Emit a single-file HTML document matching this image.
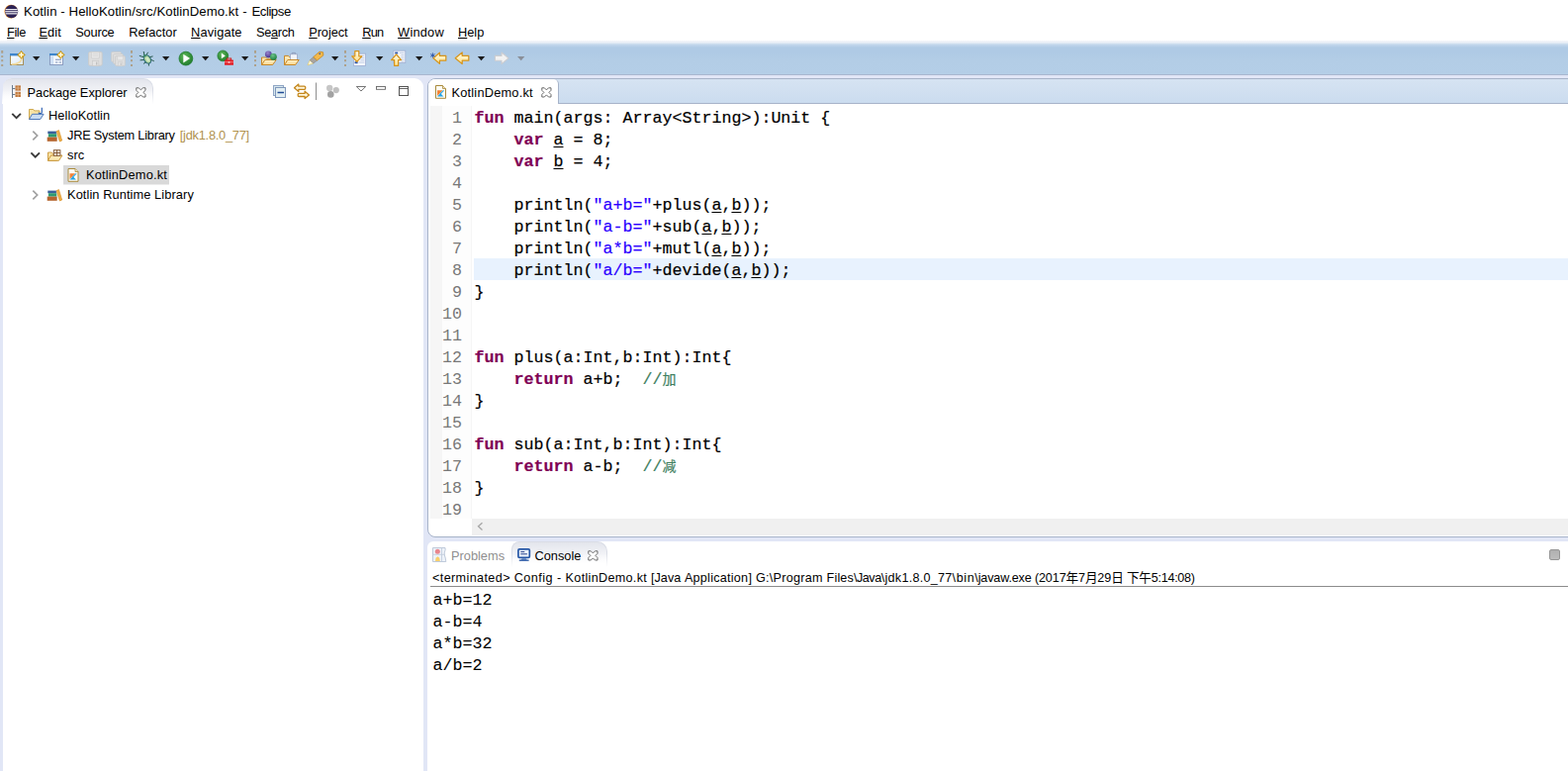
<!DOCTYPE html>
<html lang="en">
<head>
<meta charset="utf-8">
<title>Kotlin - HelloKotlin/src/KotlinDemo.kt - Eclipse</title>
<style>
*{box-sizing:border-box;margin:0;padding:0}
html,body{width:1585px;height:779px;overflow:hidden;background:#fff}
body{position:relative;font-family:"Liberation Sans","Noto Sans CJK SC",sans-serif;font-size:12px;color:#000}
.a{position:absolute}
.t{position:absolute;white-space:pre;line-height:16px;height:16px}
u{text-decoration:underline;text-underline-offset:1px}
/* title + menu */
#title{left:24px;top:4px;font-size:13.2px}
.m{top:25px;font-size:12.8px}
/* toolbar */
#tb{left:0;top:41px;width:1585px;height:35px;background:linear-gradient(#f3f5f9 0,#e9eff7 2px,#c3d7ec 4px,#afcae5 7px,#afcae5 12px,#b3cde6 20px,#b4cee7 100%)}
#tbline{left:0;top:75px;width:1585px;height:1px;background:#a9b7cf}
#bg{left:0;top:76px;width:1585px;height:703px;background:#e1e6f6}
/* panels */
#left{left:3px;top:79px;width:425px;height:710px;background:#fff;border-radius:9px 9px 0 0}
#editor{left:432px;top:79px;width:1170px;height:464px;background:#fff;border:1px solid #a7b3c9;border-radius:8px 0 0 8px}
#edtabs{left:433px;top:80px;width:1160px;height:25px;background:linear-gradient(#d6e3f2,#cbdcef);border-bottom:1px solid #a7b3c9;border-radius:7px 0 0 0}
#edtab{left:433px;top:80px;width:132px;height:25px;background:#fff;border-right:1px solid #a7b3c9;border-radius:7px 5px 0 0}
#console{left:432px;top:547px;width:1170px;height:240px;background:#fff;border-radius:6px 0 0 0}
.pe{font-size:12.8px}
#petab{left:3px;top:79px;width:152px;height:26px;border-radius:9px 10px 0 0;background:linear-gradient(#e3e5ec 0,#f1f2f6 45%,#fff 90%);border:1px solid #dadde6;border-bottom:0;border-left:0}
#contab{left:517px;top:547px;width:97px;height:26px;border-radius:8px 10px 0 0;background:linear-gradient(#e3e5ec 0,#f1f2f6 45%,#fff 90%);border:1px solid #dadde6;border-bottom:0}
#petab::after,#contab::after{content:"";position:absolute;left:-1px;right:-1px;bottom:0;height:14px;background:linear-gradient(rgba(255,255,255,0),#fff)}
/* code */
.ln,.c{font-family:"Liberation Mono","Noto Sans CJK SC",monospace;font-size:16.66px;line-height:22px;height:22px;position:absolute;white-space:pre}
.ln{left:427px;width:40px;text-align:right;color:#787878}
.c{left:479.5px;color:#000}
.k{color:#7f0055;font-weight:bold}
.s{color:#2a00ff}
.cm{color:#3f7f5f}
.zh{font-size:14px;line-height:10px;font-family:"Noto Sans CJK SC",sans-serif}
.c{-webkit-text-stroke:0.2px currentColor}
.o{-webkit-text-stroke:0.08px currentColor}
.v{text-decoration:underline;text-decoration-thickness:1px;text-underline-offset:2px}
.o{font-family:"Liberation Mono","Noto Sans CJK SC",monospace;font-size:16.66px;line-height:22px;height:22px;position:absolute;white-space:pre;left:437.5px}
</style>
</head>
<body>
<!-- title bar -->
<svg class="a" style="left:2.500px;top:4px" width="16" height="16" viewBox="0 0 16 16"><circle cx="8.2" cy="7.6" r="6.8" fill="#f7941e"/><circle cx="8.6" cy="7.6" r="6.6" fill="#2c2255"/><rect x="2.6" y="5.1" width="12" height="1.1" fill="#fff"/><rect x="2.2" y="7.2" width="12.8" height="1.1" fill="#fff"/><rect x="2.6" y="9.3" width="12" height="1.1" fill="#fff"/></svg>
<div class="t" id="title"><span style="letter-spacing:0.098px">Kotlin - </span><span style="letter-spacing:0.054px">HelloKotlin/src/KotlinDemo.kt</span><span style="letter-spacing:0.489px"> - </span><span style="letter-spacing:-0.445px">Eclipse</span></div>
<!-- menu bar -->
<div class="t m" style="left:7.1px;letter-spacing:-0.481px"><u>F</u>ile</div>
<div class="t m" style="left:39.4px;letter-spacing:0.084px"><u>E</u>dit</div>
<div class="t m" style="left:76.3px;letter-spacing:-0.224px">Source</div>
<div class="t m" style="left:130.2px;letter-spacing:0.028px">Refactor</div>
<div class="t m" style="left:193.1px;letter-spacing:0.123px"><u>N</u>avigate</div>
<div class="t m" style="left:259.1px;letter-spacing:-0.358px">Se<u>a</u>rch</div>
<div class="t m" style="left:312.2px;letter-spacing:-0.061px"><u>P</u>roject</div>
<div class="t m" style="left:366.2px;letter-spacing:-0.728px"><u>R</u>un</div>
<div class="t m" style="left:402.1px;letter-spacing:0.214px"><u>W</u>indow</div>
<div class="t m" style="left:463px;letter-spacing:-0.007px"><u>H</u>elp</div>
<!-- toolbar -->
<div class="a" id="tb"></div>
<div class="a" id="tbline"></div>
<div class="a" id="bg"></div>
<!-- TOOLBAR-ICONS -->
<svg class="a" style="left:0;top:41px" width="560" height="35" viewBox="0 41 560 35">
<defs>
<linearGradient id="gWin" x1="0" y1="0" x2="1" y2="1"><stop offset="0" stop-color="#fdfeff"/><stop offset="1" stop-color="#dbe9f8"/></linearGradient>
<linearGradient id="gFold" x1="0" y1="0" x2="0" y2="1"><stop offset="0" stop-color="#fef2cc"/><stop offset="1" stop-color="#f8d68c"/></linearGradient>
<linearGradient id="gArr" x1="0" y1="0" x2="0" y2="1"><stop offset="0" stop-color="#fffbe6"/><stop offset="1" stop-color="#fce08a"/></linearGradient>
<radialGradient id="gGreen" cx="0.4" cy="0.35" r="0.7"><stop offset="0" stop-color="#5db85a"/><stop offset="1" stop-color="#1f7a2a"/></radialGradient>
<radialGradient id="gPurp" cx="0.4" cy="0.3" r="0.7"><stop offset="0" stop-color="#9a86cc"/><stop offset="1" stop-color="#4a3591"/></radialGradient>
<radialGradient id="gGrn2" cx="0.4" cy="0.3" r="0.7"><stop offset="0" stop-color="#6cc48a"/><stop offset="1" stop-color="#1d7f3f"/></radialGradient>
<g id="dd"><path d="M0 0h7.4l-3.7 4.3z"/></g>
<g id="hd"><rect x="0" y="-0.600" width="2" height="2.800" fill="#ada08a"/><rect x="0" y="4.600" width="2" height="1.800" fill="#ada08a"/><rect x="0" y="8.600" width="2" height="2" fill="#ada08a"/><rect x="0" y="13.400" width="2" height="2" fill="#ada08a"/></g>
<g id="star"><path d="M0 -3.900C1 -2.400 2.400 -1 3.900 0C2.400 1 1 2.400 0 3.900C-1 2.400 -2.400 1 -3.900 0C-2.400 -1 -1 -2.400 0 -3.900Z" fill="#e0b030" stroke="#b98a14" stroke-width="0.700"/><circle r="2.300" fill="#e6bb3e"/><path d="M0 -2.300V2.300M-2.300 0H2.300" stroke="#fffbe6" stroke-width="1.100"/></g>
</defs>
<!-- handles -->
<use href="#hd" x="1.200" y="51.600"/><use href="#hd" x="132" y="51.600"/><use href="#hd" x="257" y="51.600"/><use href="#hd" x="348" y="51.600"/>
<!-- dropdown arrows -->
<g fill="#1a1a1a"><use href="#dd" x="33" y="57"/><use href="#dd" x="73" y="57"/><use href="#dd" x="164" y="57"/><use href="#dd" x="204" y="57"/><use href="#dd" x="244" y="57"/><use href="#dd" x="335" y="57"/><use href="#dd" x="380" y="57"/><use href="#dd" x="420" y="57"/><use href="#dd" x="482.8" y="57"/></g>
<use href="#dd" x="523" y="57" fill="#8a8f98"/>
<!-- 1 new -->
<rect x="10.5" y="54.5" width="13" height="11" fill="url(#gWin)" stroke="#a89058" stroke-width="1"/>
<rect x="10" y="54" width="14" height="2.4" fill="#3f86cc"/>
<path d="M12 65c5 0 9.5-2 10.5-7" fill="none" stroke="#f3dca0" stroke-width="1.6"/>
<use href="#star" x="21.5" y="55.4"/>
<!-- 2 new wizard -->
<rect x="50.5" y="54.5" width="13" height="11" fill="#f4f8fd" stroke="#8b9cc0" stroke-width="1"/>
<rect x="50" y="54" width="9" height="2.2" fill="#3f86cc"/>
<rect x="51" y="56.4" width="3.2" height="8.6" fill="#cfe0f5"/>
<path d="M56 60.2h6M56 63h2.4M59.6 63h2.4" stroke="#7d8fb8" stroke-width="1.1"/>
<use href="#star" x="61.4" y="55.4"/>
<!-- 3 save (disabled) -->
<rect x="89.600" y="52.500" width="13.600" height="13.800" rx="1.400" fill="#dedede" stroke="#c9c9c9" stroke-width="0.900"/>
<rect x="92.400" y="52.600" width="8" height="6.400" rx="0.800" fill="#e7e7e7" stroke="#cbcbcb" stroke-width="0.700"/><path d="M93.800 54.600h5.200M93.800 56.400h5.200" stroke="#d2d2d2" stroke-width="0.700"/>
<rect x="93.600" y="61.600" width="6.200" height="4.800" fill="#e4e4e4" stroke="#cbcbcb" stroke-width="0.700"/><rect x="97" y="62.600" width="1.400" height="3" fill="#bfbfbf"/>
<!-- 4 save all (disabled) -->
<g fill="#dfdfdf" stroke="#cacaca" stroke-width="0.800"><rect x="112.600" y="52.400" width="9.800" height="10" rx="1.200"/><rect x="114.600" y="54.500" width="9.800" height="10" rx="1.200"/><rect x="116.600" y="56.600" width="9.800" height="10" rx="1.200"/></g>
<rect x="118.600" y="56.800" width="5.800" height="4" rx="0.600" fill="#e8e8e8" stroke="#cccccc" stroke-width="0.600"/><rect x="119.400" y="62.800" width="4.400" height="3.800" fill="#e4e4e4" stroke="#cccccc" stroke-width="0.600"/><rect x="121.600" y="63.600" width="1.100" height="2.400" fill="#c2c2c2"/>
<!-- 5 bug -->
<g stroke="#2b5c50" stroke-width="1" fill="none" stroke-linecap="round"><path d="M146 56l-0.700-3.600M147.800 55.600l1.700-2.500M146 58l-4.800-1.600M146.400 60.400l-4.400 0.400M147.600 62.600l-2.200 1.600M151.400 57.600l2.800-0.600M152.200 60.200l3.200 1.400M150.600 63l-0.200 3.200"/></g>
<ellipse cx="149" cy="59.900" rx="3.200" ry="4.500" transform="rotate(-32 149 59.900)" fill="#aed4a0" stroke="#2a6874" stroke-width="1.100"/>
<ellipse cx="149.200" cy="60.200" rx="1.400" ry="2.600" transform="rotate(-32 149 59.900)" fill="#d4ebc8"/>
<circle cx="146.200" cy="56.400" r="1.400" fill="#3f8a6c"/>
<!-- 6 run -->
<circle cx="187.9" cy="59.1" r="6.9" fill="url(#gGreen)" stroke="#1c7a2c" stroke-width="0.8"/>
<path d="M185.300 54.700l6.800 4.400-6.800 4.400z" fill="#fff"/>
<!-- 7 run ext -->
<circle cx="225.3" cy="56.4" r="5.4" fill="url(#gGreen)" stroke="#1c7a2c" stroke-width="0.7"/>
<path d="M223.8 53.6l4 2.8-4 2.8z" fill="#fff"/>
<rect x="229.4" y="59" width="4.2" height="2" fill="none" stroke="#d81e1e" stroke-width="1"/>
<rect x="227" y="60.6" width="9" height="5.2" rx="0.6" fill="#e21e26"/>
<path d="M227 62.8h9" stroke="#f59a9a" stroke-width="0.8"/><rect x="230.6" y="62" width="1.8" height="1.8" fill="#f8c0c0"/>
<!-- 8 open type -->
<path d="M264.5 58h4l1 1.2h5.5v6.3h-10.5z" fill="#fbe6b0" stroke="#c8892a" stroke-width="1"/>
<path d="M264.6 65.5l3.2-5h11.4l-3.6 5z" fill="url(#gFold)" stroke="#c8892a" stroke-width="1" stroke-linejoin="round"/>
<circle cx="271.3" cy="54.8" r="3.4" fill="url(#gPurp)"/>
<circle cx="276.4" cy="57.4" r="3.4" fill="url(#gGrn2)"/>
<!-- 9 open task -->
<path d="M287.5 56.4h4l1 1.2h5.5v7.9h-10.5z" fill="#fbe6b0" stroke="#c8892a" stroke-width="1"/>
<rect x="293.4" y="54.8" width="7" height="5.6" fill="#f2f5fb" stroke="#9aa6c4" stroke-width="0.8"/>
<path d="M295.2 54.6v-1.2h3.4v1.2" fill="none" stroke="#8b98b8" stroke-width="0.9"/>
<path d="M287.6 65.5l3.2-5h11.4l-3.6 5z" fill="url(#gFold)" stroke="#c8892a" stroke-width="1" stroke-linejoin="round"/>
<!-- 10 pencil/search -->
<path d="M311 65.8l2.2-5 3.6 3.2z" fill="#fffbe0" stroke="#e6c65a" stroke-width="0.6"/>
<path d="M313.2 60.8l3.6-3.2 3.8 3.4-3.8 3z" fill="#a8a4a0" stroke="#8a8680" stroke-width="0.6"/>
<path d="M316.8 57.6l6.2-5.4 3.6.6.2 3.2-6.200 5z" fill="#f4b94a" stroke="#c8861c" stroke-width="0.8" stroke-linejoin="round"/>
<path d="M322.6 54.8l1.2-1" stroke="#2b4fa0" stroke-width="1.2"/>
<!-- 11 next annotation -->
<rect x="357.4" y="54.2" width="12.2" height="12.2" fill="#f3f6fc" stroke="#9fb0d2" stroke-width="0.8"/>
<path d="M364.400 56.4h4M364.400 58.6h4M364.400 60.800h4M362.600 63h5.800" stroke="#b9c6e0" stroke-width="0.9"/>
<rect x="358.6" y="62.2" width="3" height="2" fill="#2c55a8"/>
<path d="M358.8 51.600h4v5.200h3l-5 5.600-5-5.600h3z" fill="url(#gArr)" stroke="#d6941a" stroke-width="1.2" stroke-linejoin="round"/>
<!-- 12 prev annotation -->
<rect x="397.800" y="51.200" width="12" height="12.400" fill="#f3f6fc" stroke="#9fb0d2" stroke-width="0.8"/>
<rect x="399.200" y="52.600" width="3" height="1.800" fill="#2c55a8"/>
<path d="M404 53.400h4.600M405.400 55.600h3.200M405.400 57.800h3.200M405.400 60h3.200M405.400 62.200h3.200" stroke="#b9c6e0" stroke-width="0.9"/>
<path d="M398.600 66.400h4v-5.800h3l-5-5.600-5 5.600h3z" fill="url(#gArr)" stroke="#d6941a" stroke-width="1.2" stroke-linejoin="round"/>
<!-- 13 last edit -->
<path d="M450.800 56.400v4.800h-6.400v3.200l-6.400-5.600 6.400-5.600v3.200z" fill="url(#gArr)" stroke="#d6941a" stroke-width="1.2" stroke-linejoin="round"/>
<path d="M437.400 53.400v5M435.200 54.600l4.400 2.600M439.600 54.600l-4.400 2.600" stroke="#2c55a8" stroke-width="0.9"/>
<!-- 14 back -->
<path d="M473.800 56.400v4.800h-6.600v3.400l-7-5.800 7-5.800v3.400z" fill="url(#gArr)" stroke="#d6941a" stroke-width="1.2" stroke-linejoin="round"/>
<!-- 15 forward disabled -->
<path d="M500.400 56.400v4.800h6.600v3.400l7-5.800-7-5.800v3.400z" fill="#f2f2f2" stroke="#cccdd0" stroke-width="1.1" stroke-linejoin="round"/>
</svg>
<!-- /TOOLBAR-ICONS -->
<!-- panels -->
<div class="a" id="left"></div>
<div class="a" id="editor"></div>
<div class="a" id="edtabs"></div>
<div class="a" id="edtab"></div>
<div class="a" id="console"></div>
<!-- LEFT-PANEL -->
<div class="a" id="petab"></div>
<svg class="a" style="left:0;top:79px" width="430" height="130" viewBox="0 79 430 130">
<defs>
<g id="chd"><path d="M0 0l4.300 4.300 4.300-4.300" fill="none" stroke="#3a3a3a" stroke-width="1.900"/></g>
<g id="chr"><path d="M0 0l4.400 4.400-4.400 4.400" fill="none" stroke="#a0a0a0" stroke-width="1.700"/></g>
<g id="lib"><rect x="1" y="1.200" width="8.600" height="2.600" fill="#3a5f9a"/><rect x="1.600" y="3.800" width="8.400" height="3.400" fill="#2f9a72"/><rect x="0.400" y="7.200" width="10" height="4.200" fill="#b5652f"/><path d="M9.800 1.200l2.400-1 3.200 10.400-2.400 1z" fill="#f0b04a" stroke="#d48a1c" stroke-width="0.600"/></g>
<g id="ktf"><path d="M0.500 0.500h7l3 3v9.800h-10z" fill="#fdfcf4" stroke="#a88a3c" stroke-width="1"/><path d="M7.500 0.500v3h3" fill="#f1e6c0" stroke="#a88a3c" stroke-width="0.800"/><path d="M2 5.200h5.600l-5.600 5.800z" fill="#f58233"/><path d="M2 11.600l3.200-3.300 3.200 3.300z" fill="#1fa3e8"/><path d="M4.400 8.600l3.400-3.400h1.100v0.600l-3.300 3.400z" fill="#1fa3e8" opacity="0.900"/></g>
</defs>
<!-- PE tab icon -->
<path d="M12.500 86v13M12.500 89.500h3M12.500 95.500h3" stroke="#6a7a8c" stroke-width="1" fill="none"/>
<rect x="15.500" y="86.400" width="5.400" height="5.200" fill="#c0763a"/><rect x="15.500" y="92.800" width="5.400" height="5.200" fill="#c0763a"/>
<path d="M18.200 86.400v5.200M15.500 89h5.400M18.200 92.800v5.200M15.500 95.400h5.400" stroke="#e9c39a" stroke-width="0.700"/>
<!-- close X -->
<path d="M137.8 88.8h2.5l2.1 2.1 2.1-2.1h2.5v2.5l-2.1 2.1 2.1 2.1v2.5h-2.5l-2.1-2.1-2.1 2.1h-2.5v-2.5l2.1-2.1-2.1-2.1z" fill="#fff" stroke="#5a5a5a" stroke-width="0.900" stroke-linejoin="miter"/>
<!-- view toolbar -->
<rect x="276.500" y="86.500" width="10" height="10" fill="#d9e8ef" stroke="#8fa6c4"/><rect x="278.500" y="88.500" width="10" height="10" fill="#e3eff3" stroke="#7f97bb"/><path d="M280.500 93.500h6.500" stroke="#1f4a94" stroke-width="1.500"/>
<g fill="#fff6dc" stroke="#c4861a" stroke-width="1.300" stroke-linejoin="round"><path d="M297.500 88.800l4.300-3.700v2.100h5.800c1.600 0 1.600 3.200 0 3.200h-5.800v2.100z"/><path d="M312.400 95.900l-4.300-3.700v2.100h-5.800c-1.600 0-1.600 3.200 0 3.200h5.800v2.100z"/></g>
<path d="M319.500 83.500v17.500" stroke="#8f8f8f" stroke-width="1"/>
<circle cx="333.200" cy="88.900" r="3.200" fill="#c6c6c6"/><circle cx="339.800" cy="91.100" r="3.100" fill="#c0c0c0"/><circle cx="334.300" cy="95.400" r="3.300" fill="#a2a2a2"/>
<path d="M360.300 87.500h9.400l-4.700 4.500z" fill="#fff" stroke="#666" stroke-width="0.900"/>
<rect x="380.500" y="87.500" width="9" height="2.800" fill="#fff" stroke="#666" stroke-width="0.900"/>
<rect x="403.500" y="87.500" width="9" height="9" fill="#fff" stroke="#555" stroke-width="1"/><path d="M403.500 89.500h9" stroke="#555" stroke-width="0.900"/>
<!-- tree -->
<use href="#chd" x="12.300" y="114.800"/>
<path d="M29.500 110.500h4.200l1 1.400h5.300v8.600h-10.500z" fill="#f9e3a4" stroke="#c9a040" stroke-width="0.900"/><path d="M29.500 120.500l3-5.200h11.600l-3.400 5.200z" fill="#c9dcf3" stroke="#4f78b8" stroke-width="1" stroke-linejoin="round"/><path d="M42.300 108.800v4.600c0 1.500-3 1.700-3.300 0.200" fill="none" stroke="#2f62b4" stroke-width="1.200"/>
<use href="#chr" x="33.300" y="132.600"/><use href="#lib" x="47.300" y="131.400"/>
<use href="#chd" x="31.400" y="154.400"/>
<path d="M48.500 154h3.800l1 1.300h4.200v7h-9z" fill="#f9e3a4" stroke="#c9963a" stroke-width="0.900"/><path d="M48.500 162.300l3-5.300h11.400l-3.400 5.300z" fill="#fbe9b4" stroke="#c9963a" stroke-width="1" stroke-linejoin="round"/><rect x="54.300" y="151.700" width="6.600" height="5.600" fill="#fdf6e6" stroke="#7a4f2c" stroke-width="0.900"/><path d="M57.600 151.700v5.600M54.300 154.500h6.600" stroke="#7a4f2c" stroke-width="0.900"/>
<rect x="64" y="167" width="107" height="19.500" fill="#d9d9d9"/>
<use href="#ktf" x="68.500" y="170"/>
<use href="#chr" x="33.300" y="192.600"/><use href="#lib" x="47.300" y="191.400"/>
</svg>
<div class="t pe" style="left:27.500px;top:86px">Package Explorer</div>
<div class="t pe" style="left:49px;top:109px;letter-spacing:0.1px">HelloKotlin</div>
<div class="t pe" style="left:68px;top:129px"><span style="letter-spacing:-0.24px">JRE System Library</span> <span style="color:#b0914e;letter-spacing:-0.25px;margin-left:1.500px">[jdk1.8.0_77]</span></div>
<div class="t pe" style="left:68px;top:149px">src</div>
<div class="t pe" style="left:87px;top:169px;letter-spacing:0.18px">KotlinDemo.kt</div>
<div class="t pe" style="left:68px;top:189px;letter-spacing:0.09px">Kotlin Runtime Library</div>
<!-- /LEFT-PANEL -->
<!-- EDITOR -->
<div class="a" style="left:435px;top:107px;width:12px;height:417px;background:#f6f6f6"></div>
<div class="a" style="left:447px;top:107px;width:30px;height:417px;background:#fdfdfd;border-right:1px solid #f6f6f6"></div>
<div class="a" style="left:479px;top:261px;width:1106px;height:22px;background:#e8f2fe"></div>
<div class="a" style="left:477px;top:524px;width:1108px;height:17px;background:#f0f0f0"></div>
<svg class="a" style="left:480px;top:526px" width="12" height="12" viewBox="0 0 12 12"><path d="M7.5 2.200l-4 3.600 4 3.600" fill="none" stroke="#a6a6a6" stroke-width="1.300"/></svg>
<div class="ln" style="top:109px">1</div>
<div class="c" style="top:109px"><span class="k">fun</span> main(args: Array&lt;String&gt;):Unit {</div>
<div class="ln" style="top:131px">2</div>
<div class="c" style="top:131px">    <span class="k">var</span> <span class="v">a</span> = 8;</div>
<div class="ln" style="top:153px">3</div>
<div class="c" style="top:153px">    <span class="k">var</span> <span class="v">b</span> = 4;</div>
<div class="ln" style="top:175px">4</div>
<div class="ln" style="top:197px">5</div>
<div class="c" style="top:197px">    println(<span class="s">"a+b="</span>+plus(<span class="v">a</span>,<span class="v">b</span>));</div>
<div class="ln" style="top:219px">6</div>
<div class="c" style="top:219px">    println(<span class="s">"a-b="</span>+sub(<span class="v">a</span>,<span class="v">b</span>));</div>
<div class="ln" style="top:241px">7</div>
<div class="c" style="top:241px">    println(<span class="s">"a*b="</span>+mutl(<span class="v">a</span>,<span class="v">b</span>));</div>
<div class="ln" style="top:263px">8</div>
<div class="c" style="top:263px">    println(<span class="s">"a/b="</span>+devide(<span class="v">a</span>,<span class="v">b</span>));</div>
<div class="ln" style="top:285px">9</div>
<div class="c" style="top:285px">}</div>
<div class="ln" style="top:307px">10</div>
<div class="ln" style="top:329px">11</div>
<div class="ln" style="top:351px">12</div>
<div class="c" style="top:351px"><span class="k">fun</span> plus(a:Int,b:Int):Int{</div>
<div class="ln" style="top:373px">13</div>
<div class="c" style="top:373px">    <span class="k">return</span> a+b;  <span class="cm">//<span class="zh">加</span></span></div>
<div class="ln" style="top:395px">14</div>
<div class="c" style="top:395px">}</div>
<div class="ln" style="top:417px">15</div>
<div class="ln" style="top:439px">16</div>
<div class="c" style="top:439px"><span class="k">fun</span> sub(a:Int,b:Int):Int{</div>
<div class="ln" style="top:461px">17</div>
<div class="c" style="top:461px">    <span class="k">return</span> a-b;  <span class="cm">//<span class="zh">减</span></span></div>
<div class="ln" style="top:483px">18</div>
<div class="c" style="top:483px">}</div>
<div class="ln" style="top:505px">19</div>
<svg class="a" style="left:438px;top:84px" width="130" height="18" viewBox="438 84 130 18"><use href="#ktf" x="440" y="86"/>
<path d="M547.8 88.8h2.5l2.1 2.1 2.1-2.1h2.5v2.5l-2.1 2.1 2.1 2.1v2.5h-2.5l-2.1-2.1-2.1 2.1h-2.5v-2.5l2.1-2.1-2.1-2.1z" fill="#fff" stroke="#5a5a5a" stroke-width="0.900" stroke-linejoin="miter"/></svg>
<div class="t pe" style="left:456.500px;top:86px;letter-spacing:0.2px">KotlinDemo.kt</div>
<!-- /EDITOR -->
<!-- CONSOLE -->

<div class="a" id="contab"></div>
<svg class="a" style="left:436px;top:550px" width="180" height="22" viewBox="436 550 180 22">
<path d="M437.500 553.500h12.500c1 2.500-1.600 4.500-0.600 7.500 0.600 2 1.400 4 1.400 6.500h-13.300z" fill="#edf2f9" stroke="#b9c4d6" stroke-width="0.900"/><path d="M446.500 553.500v14M437.500 560.300h12" stroke="#c3cddd" stroke-width="0.900"/><circle cx="442.300" cy="557.300" r="2.500" fill="#e9868e"/><path d="M440 567l0.600-3.200 1.800-1.600 1.800 1.600 0.600 3.200z" fill="#f9cf6a"/>
<rect x="523.900" y="554.800" width="11.400" height="8.600" rx="1.200" fill="#eef4fc" stroke="#2757a6" stroke-width="1.700"/><path d="M526.300 557.600h4M526.300 559.800h6.600" stroke="#26408c" stroke-width="1"/><path d="M527.600 564.400h4l1.200 1.300h-6.400z" fill="#2757a6"/><path d="M524.800 566.200h9.800" stroke="#2757a6" stroke-width="1.300"/>
<path d="M594.8 556.8h2.5l2.1 2.1 2.1-2.1h2.5v2.5l-2.1 2.1 2.1 2.1v2.5h-2.5l-2.1-2.1-2.1 2.1h-2.5v-2.5l2.1-2.1-2.1-2.1z" fill="#fff" stroke="#5a5a5a" stroke-width="0.900" stroke-linejoin="miter"/>
</svg>
<div class="t pe" style="left:456px;top:554px;color:#8f8f8f">Problems</div>
<div class="t pe" style="left:540.500px;top:554px">Console</div>
<div class="a" style="left:1566px;top:555px;width:11px;height:11px;background:linear-gradient(#b0b0b0,#bcbcbc);border:1px solid #969696;border-radius:2px"></div>
<div class="t" style="left:437px;top:576px;font-size:12.6px"><span style="letter-spacing:0.391px">&lt;terminated&gt; </span><span style="letter-spacing:0.466px">Config - </span><span style="letter-spacing:0.315px">KotlinDemo.kt </span><span style="letter-spacing:0.065px">[Java </span><span style="letter-spacing:0.261px">Application] </span><span style="letter-spacing:0.282px">G:\Program </span><span style="letter-spacing:0.141px">Files</span><span style="letter-spacing:-0.462px">\Java</span><span style="letter-spacing:0.273px">\jdk1.8.0_77</span><span style="letter-spacing:0.597px">\bin</span><span style="letter-spacing:-0.156px">\javaw.exe </span><span style="letter-spacing:-0.118px">(2017年7月29日 </span><span style="letter-spacing:-0.261px">下午5:14:08)</span></div>
<div class="a" style="left:435px;top:592px;width:1150px;height:1px;background:#8c8c8c"></div>
<div class="o" style="top:596px">a+b=12</div>
<div class="o" style="top:618px">a-b=4</div>
<div class="o" style="top:640px">a*b=32</div>
<div class="o" style="top:662px">a/b=2</div>
<!-- /CONSOLE -->
</body>
</html>
